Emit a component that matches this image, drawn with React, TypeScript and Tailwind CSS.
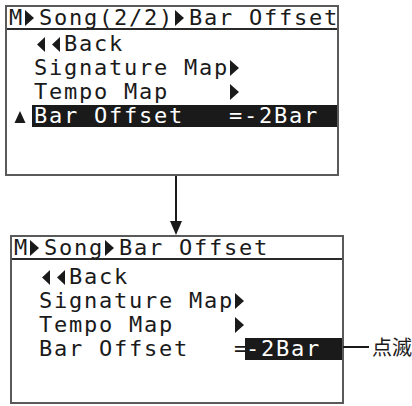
import type { ReactNode } from "react";
import { clsx as cn } from "clsx";

// LCD-ish monospace: 22px DejaVu Sans Mono + tracking gives ~15px columns
const lcd = "font-['DejaVu_Sans_Mono','Liberation_Mono',monospace] text-[22px] tracking-[1.75px] leading-[22px] whitespace-pre";

function Right({ className }: { className?: string }) {
  return (
    <svg width="15" height="22" viewBox="0 0 15 22" className={cn("shrink-0", className)} aria-hidden>
      <polygon points="1,3 10,11 1,19" fill="currentColor" />
    </svg>
  );
}

function Left() {
  return (
    <svg width="15" height="22" viewBox="0 0 15 22" className="shrink-0" aria-hidden>
      <polygon points="11,4 3,11.5 11,19" fill="currentColor" />
    </svg>
  );
}

function Up() {
  return (
    <svg width="12" height="13" viewBox="0 0 12 13" aria-hidden>
      <polygon points="6,0 11.5,12 0.5,12" fill="currentColor" />
    </svg>
  );
}

function Row({ marker, hl, children }: { marker?: ReactNode; hl?: boolean; children: ReactNode }) {
  return (
    <div className="mt-[2px] flex h-[22px]">
      <div className="flex w-[25px] items-end justify-center pb-[3px] text-[#1a1a1a]">{marker}</div>
      <div className={cn("flex flex-1 items-center pl-[2px]", lcd, hl ? "bg-[#1a1a1a] text-white" : "text-[#1a1a1a]")}>
        {children}
      </div>
    </div>
  );
}

function Screen({ title, pad, last }: { title: ReactNode; pad: string; last: ReactNode }) {
  return (
    <div className="flex h-full flex-col border-2 border-[#5a5a5a] bg-white">
      <div className={cn("flex h-[23px] items-center border-b-2 border-[#2a2a2a] pl-[2px] text-[#1a1a1a]", lcd)}>{title}</div>
      <div className={pad}>
        <Row>
          <Left />
          <Left />
          <span>Back</span>
        </Row>
        <Row>
          <span>Signature Map</span>
          <Right />
        </Row>
        <Row>
          <span>Tempo Map    </span>
          <Right />
        </Row>
        {last}
      </div>
    </div>
  );
}

export default function App() {
  return (
    <div className="h-[406px] w-[412px] overflow-hidden bg-white">
      <div className="ml-[5px] mt-[5px] h-[171px] w-[334px]">
        <Screen
          pad="pt-[1px]"
          title={
            <>
              <span>M</span>
              <Right />
              <span>Song(2/2)</span>
              <Right />
              <span>Bar Offset</span>
            </>
          }
          last={
            <Row marker={<Up />} hl>
              <span>Bar Offset   =-2Bar</span>
            </Row>
          }
        />
      </div>

      {/* arrow between the two screens */}
      <svg width="14" height="59" viewBox="0 0 14 59" className="ml-[169px] block text-[#1a1a1a]" aria-hidden>
        <rect x="6" y="0" width="2" height="46" fill="currentColor" />
        <polygon points="1,45 13,45 7,59" fill="currentColor" />
      </svg>

      <div className="ml-[10px] flex items-start">
        <div className="h-[169px] w-[334px] shrink-0">
          <Screen
            pad="pt-[4px]"
            title={
              <>
                <span>M</span>
                <Right />
                <span>Song</span>
                <Right />
                <span>Bar Offset</span>
              </>
            }
            last={
              <Row>
                <span>Bar Offset   =</span>
                <span className="-ml-[4px] flex h-full flex-1 items-center bg-[#1a1a1a] pl-[1px] text-white">-2Bar</span>
              </Row>
            }
          />
        </div>
        <div className="mt-[100px] flex items-center">
          <div className="ml-[-1px] h-[2px] w-[26px] bg-[#1a1a1a]" />
          <span className="ml-[3px] font-['Noto_Sans_CJK_JP','Noto_Sans_CJK_SC',sans-serif] text-[20px] leading-[24px] text-[#1a1a1a]">
            点滅
          </span>
        </div>
      </div>
    </div>
  );
}
